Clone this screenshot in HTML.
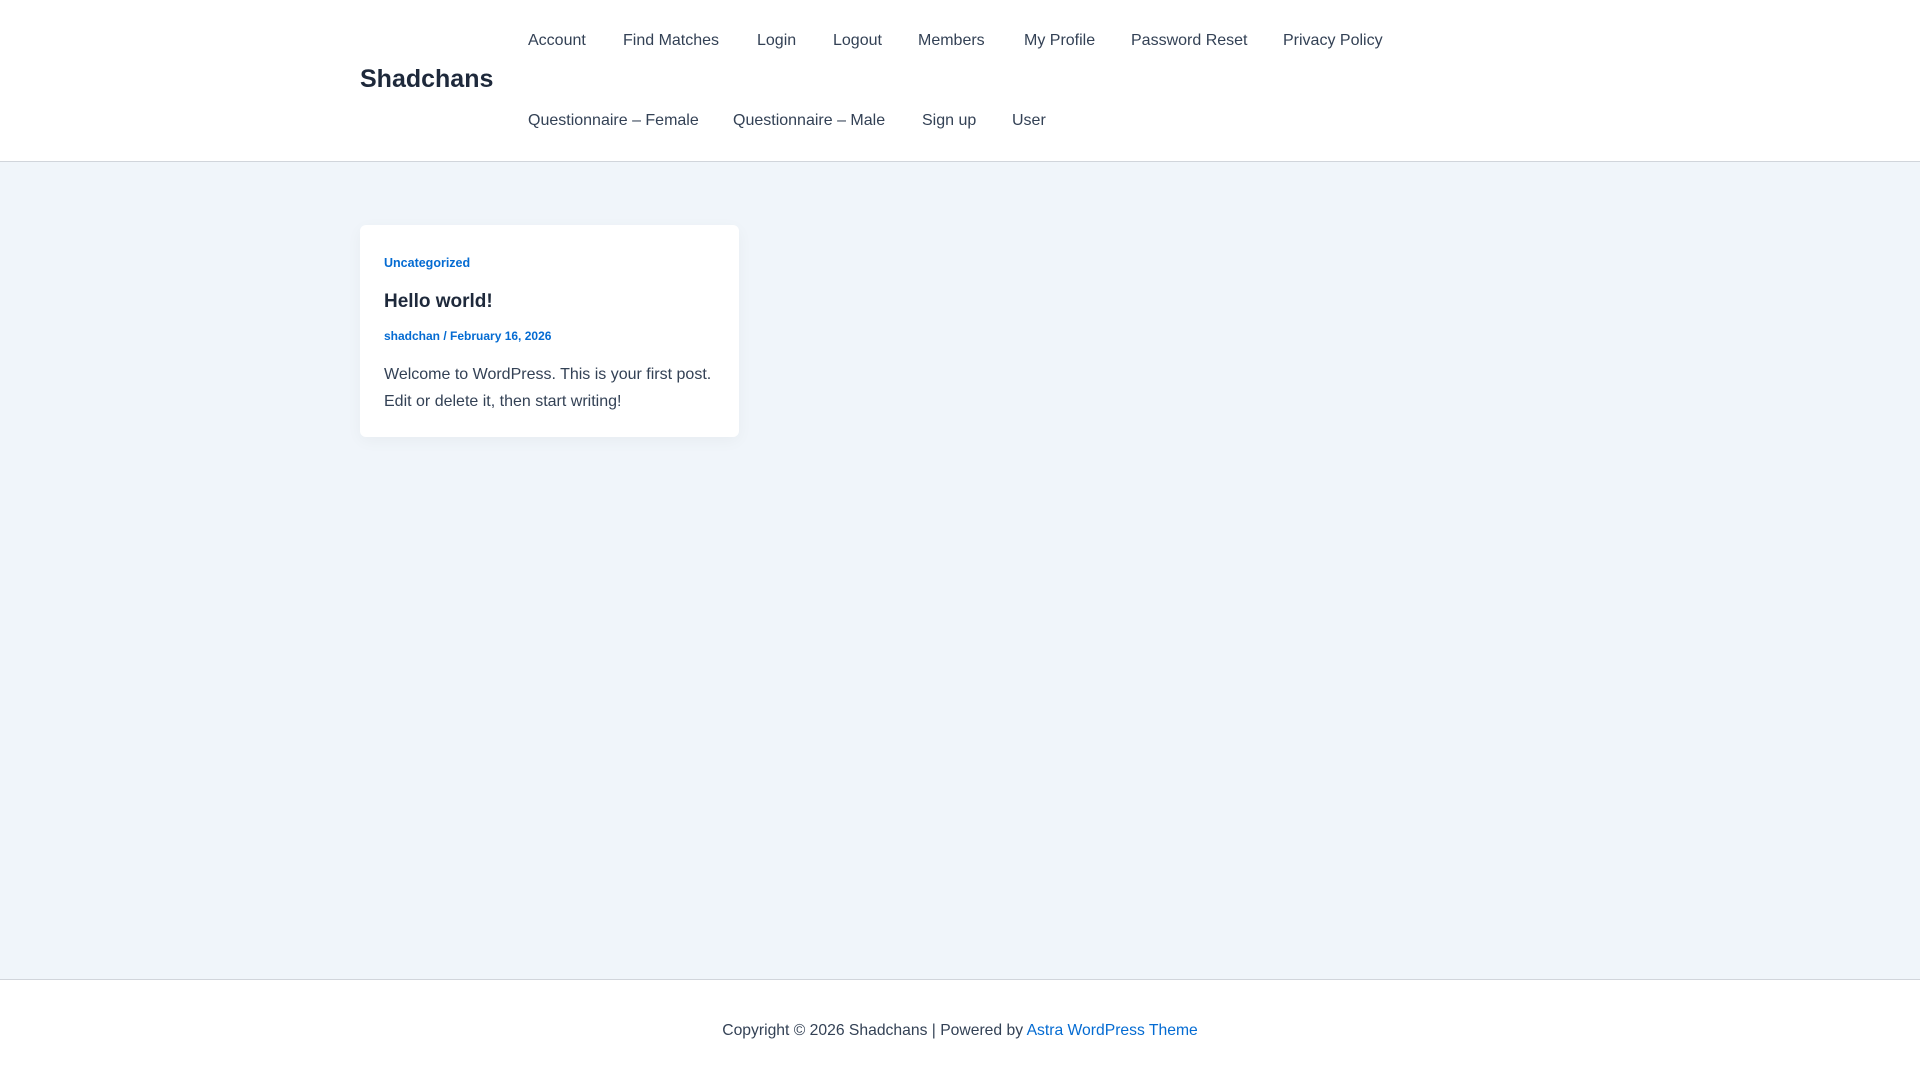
<!DOCTYPE html>
<html><head><meta charset="utf-8"><style>
html,body{margin:0;padding:0;width:1920px;height:1080px;overflow:hidden;font-family:"Liberation Sans",sans-serif;background:#f0f5fa;color:#334155}
.hdr{position:absolute;left:0;top:0;width:1920px;height:162px;background:#fff;border-bottom:1px solid #d1d5db;box-sizing:border-box}
.logo{position:absolute;left:360px;top:64px;font-size:25px;font-weight:bold;color:#1e293b;line-height:30px}
.n{position:absolute;font-size:16px;line-height:20px;color:#334155;white-space:nowrap}
.card{position:absolute;left:360px;top:225px;width:379px;height:212px;background:#fff;border-radius:6px;box-shadow:0 4px 16px rgba(0,0,0,0.04)}
.cat{position:absolute;left:24px;top:31px;font-size:12.5px;font-weight:bold;color:#046bd2}
.ttl{position:absolute;left:24px;top:66px;font-size:19px;font-weight:bold;color:#1e293b}
.meta{position:absolute;left:24px;top:104px;font-size:12px;font-weight:bold;color:#046bd2}
.ex{position:absolute;left:24px;top:136px;font-size:16px;line-height:27px;color:#334155;width:345px}
.ftr{position:absolute;left:0;top:979px;width:1920px;height:101px;background:#fff;border-top:1px solid #d1d5db;box-sizing:border-box}
.ft{position:absolute;top:42px;left:0;width:1920px;text-align:center;font-size:15.7px;color:#334155}
.ft span{color:#046bd2}
</style></head><body>
<div class="hdr">
<div class="logo">Shadchans</div>
<div class="n" style="left:528px;top:31px">Account</div>
<div class="n" style="left:623px;top:31px">Find Matches</div>
<div class="n" style="left:757px;top:31px">Login</div>
<div class="n" style="left:833px;top:31px">Logout</div>
<div class="n" style="left:918px;top:31px">Members</div>
<div class="n" style="left:1024px;top:31px">My Profile</div>
<div class="n" style="left:1131px;top:31px">Password Reset</div>
<div class="n" style="left:1283px;top:31px">Privacy Policy</div>
<div class="n" style="left:528px;top:111px">Questionnaire – Female</div>
<div class="n" style="left:733px;top:111px">Questionnaire – Male</div>
<div class="n" style="left:922px;top:111px">Sign up</div>
<div class="n" style="left:1012px;top:111px">User</div>
</div>
<div class="card">
<div class="cat">Uncategorized</div>
<div class="ttl">Hello world!</div>
<div class="meta">shadchan / February 16, 2026</div>
<div class="ex">Welcome to WordPress. This is your first post. Edit or delete it, then start writing!</div>
</div>
<div class="ftr"><div class="ft">Copyright © 2026 Shadchans | Powered by <span>Astra WordPress Theme</span></div></div>
</body></html>
